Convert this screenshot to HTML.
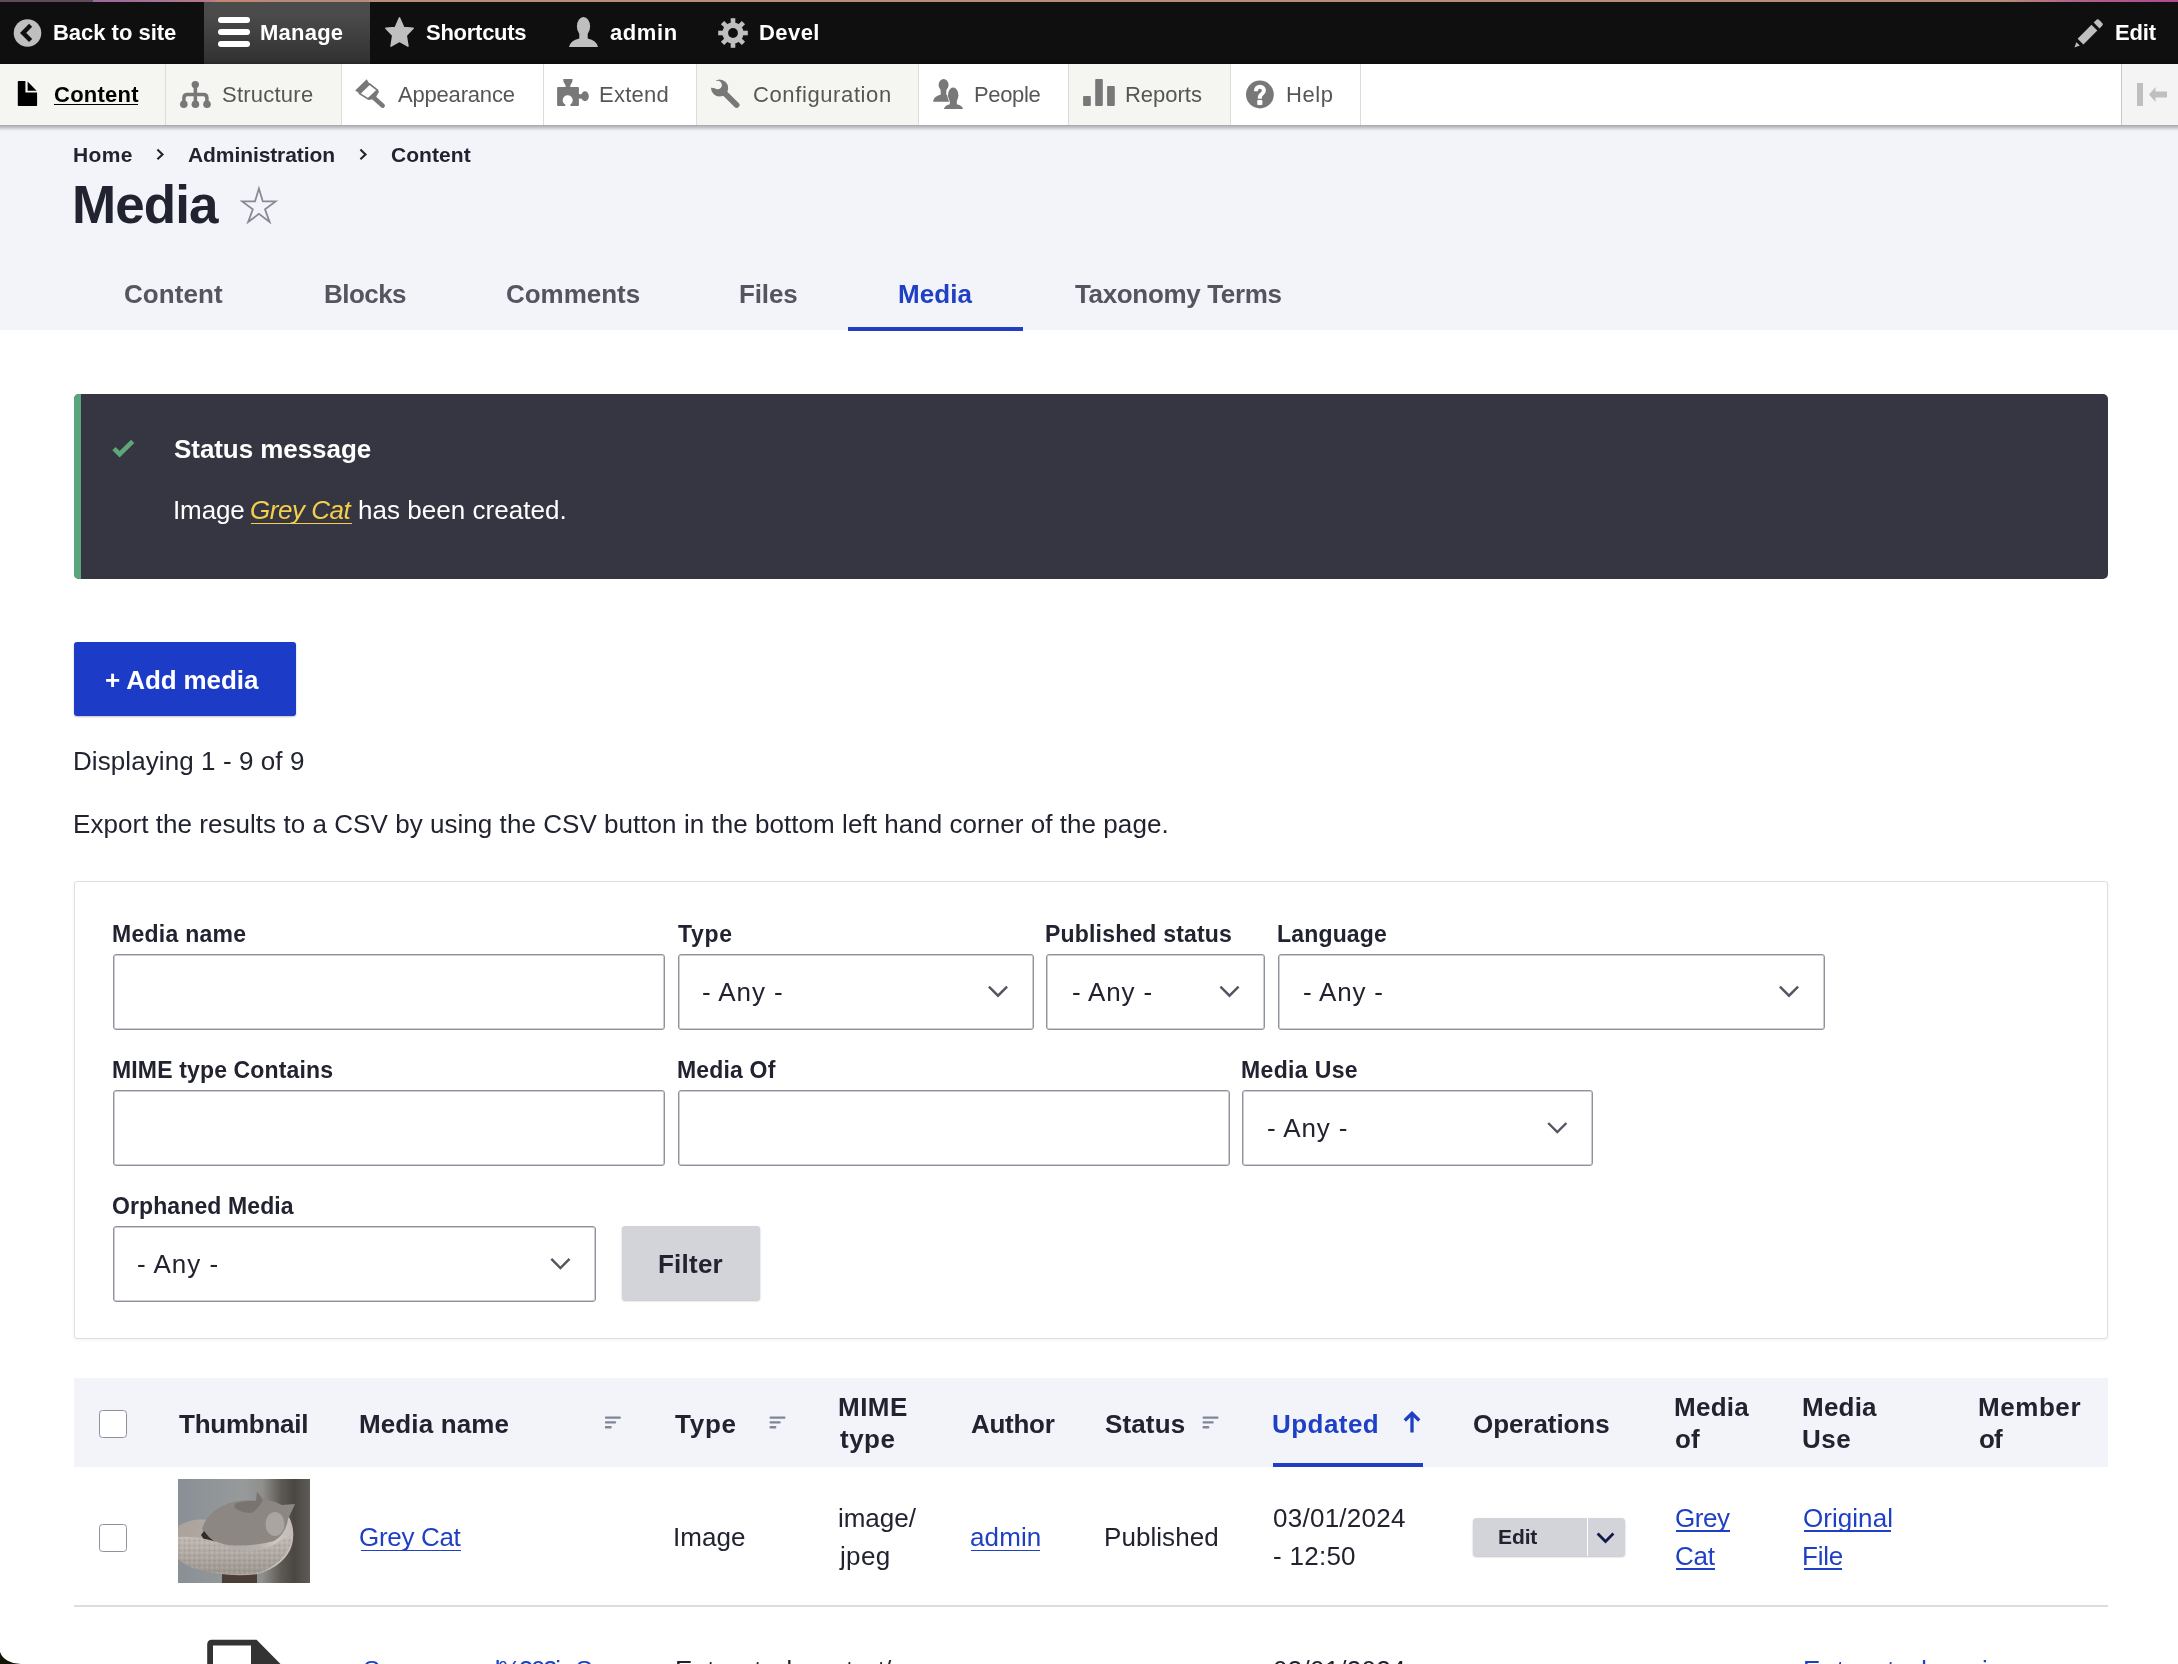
<!DOCTYPE html>
<html><head><meta charset="utf-8"><title>Media</title>
<style>
html,body{margin:0;padding:0;}
body{width:2178px;height:1664px;overflow:hidden;position:relative;background:#fff;font-family:"Liberation Sans",sans-serif;}
.a{position:absolute;}
.t{position:absolute;white-space:pre;will-change:transform;}
.inp{position:absolute;box-sizing:border-box;border:1px solid #8e929c;box-shadow:inset 0 0 0 1px rgba(142,146,156,0.45);border-radius:3px;background:#fff;}
.chev{position:absolute;}
</style></head><body>

<div class="a" style="left:0;top:0;width:2178px;height:2px;background:linear-gradient(90deg,#5e4a58 0px,#5e4a58 93px,#9a68a0 93px,#b77a88 215px,#c08670 215px,#c08670 265px,#b98c78 265px,#b98c78 2000px,#b0608a 2080px,#b04a90 2178px)"></div>
<div class="a" style="left:0;top:2px;width:2178px;height:62px;background:#0f0f0f"></div>
<div class="a" style="left:204px;top:2px;width:166px;height:62px;background:linear-gradient(180deg,#4b4b4b 0%,#4b4b4b 20%,#303030 100%)"></div>
<!-- tray -->
<div class="a" style="left:0;top:64px;width:2178px;height:61px;background:#fff;box-shadow:0 1px 4px 1px rgba(0,0,0,0.35)"></div>
<div class="a" style="left:0;top:125px;width:2178px;height:205px;background:#f3f4f9"></div>
<div class="a" style="left:0;top:125px;width:2178px;height:6px;background:linear-gradient(180deg,rgba(0,0,0,0.32),rgba(0,0,0,0))"></div>
<div class="a" style="left:0;top:64px;width:165px;height:61px;background:#f5f5f2;border-right:1px solid #dcdcdc"></div>
<div class="a" style="left:166px;top:64px;width:175px;height:61px;background:#f5f5f2;border-right:1px solid #dcdcdc"></div>
<div class="a" style="left:342px;top:64px;width:201px;height:61px;background:#fff;border-right:1px solid #dcdcdc"></div>
<div class="a" style="left:544px;top:64px;width:152px;height:61px;background:#fff;border-right:1px solid #dcdcdc"></div>
<div class="a" style="left:697px;top:64px;width:221px;height:61px;background:#f5f5f2;border-right:1px solid #dcdcdc"></div>
<div class="a" style="left:919px;top:64px;width:149px;height:61px;background:#fff;border-right:1px solid #dcdcdc"></div>
<div class="a" style="left:1069px;top:64px;width:161px;height:61px;background:#f5f5f2;border-right:1px solid #dcdcdc"></div>
<div class="a" style="left:1231px;top:64px;width:129px;height:61px;background:#fff;border-right:1px solid #dcdcdc"></div>
<div class="a" style="left:2121px;top:64px;width:57px;height:61px;background:#f4f4f4;border-left:1px solid #c8c8c8"></div>
<!-- status message -->
<div class="a" style="left:74px;top:394px;width:2034px;height:185px;background:#353641;border-radius:5px;overflow:hidden"><div class="a" style="left:0;top:0;width:7px;height:185px;background:#5aa57a"></div></div>
<!-- add media -->
<div class="a" style="left:74px;top:642px;width:222px;height:74px;background:#1c3cc8;border-radius:3px;box-shadow:0 1px 2px rgba(0,0,0,0.25)"></div>
<!-- filter box -->
<div class="a" style="left:74px;top:881px;width:2034px;height:458px;box-sizing:border-box;border:1px solid #dedfe4;border-radius:3px;background:#fff;box-shadow:0 1px 3px rgba(0,0,0,0.06)"></div>
<div class="inp" style="left:113px;top:954px;width:552px;height:76px"></div>
<div class="inp" style="left:678px;top:954px;width:356px;height:76px"></div>
<div class="inp" style="left:1046px;top:954px;width:219px;height:76px"></div>
<div class="inp" style="left:1278px;top:954px;width:547px;height:76px"></div>
<div class="inp" style="left:113px;top:1090px;width:552px;height:76px"></div>
<div class="inp" style="left:678px;top:1090px;width:552px;height:76px"></div>
<div class="inp" style="left:1242px;top:1090px;width:351px;height:76px"></div>
<div class="inp" style="left:113px;top:1226px;width:483px;height:76px"></div>
<div class="a" style="left:622px;top:1226px;width:138px;height:74px;background:#d3d4d9;border-radius:3px;box-shadow:0 1px 2px rgba(0,0,0,0.25)"></div>
<!-- table -->
<div class="a" style="left:74px;top:1378px;width:2034px;height:89px;background:#f3f4f9"></div>
<div class="a" style="left:1273px;top:1463px;width:150px;height:4px;background:#1f3fc5"></div>
<div class="a" style="left:74px;top:1605px;width:2034px;height:2px;background:#dcdde1"></div>
<div class="a" style="left:848px;top:327px;width:175px;height:4px;background:#1f3fc5"></div>
<svg class="a" style="left:0;top:0" width="2178" height="1664" viewBox="0 0 2178 1664"><circle cx="27.5" cy="33" r="13.8" fill="#bfbfbf"/><polyline points="30.6,25.3 23.1,32.9 30.6,40.5" fill="none" stroke="#0f0f0f" stroke-width="4.4"/><rect x="218" y="17" width="32" height="6" rx="3" fill="#fff"/><rect x="218" y="29" width="32" height="6" rx="3" fill="#fff"/><rect x="218" y="41" width="32" height="6" rx="3" fill="#fff"/><polygon points="399.5,17.8 403.7,27.4 413.2,28.2 406.3,35.4 408,46.2 399.5,41.3 391,46.2 392.7,35.4 385.8,28.2 395.3,27.4" fill="#bfbfbf" stroke="#bfbfbf" stroke-width="1.4" stroke-linejoin="round"/><ellipse cx="583.5" cy="26.3" rx="6.6" ry="9.4" fill="#bfbfbf"/><path d="M579.3,32 L587.7,32 L587.7,38.6 Q596.5,40.5 598,47 L569,47 Q570.5,40.5 579.3,38.6 Z" fill="#bfbfbf"/><rect x="730.70" y="18.20" width="4.6" height="7" fill="#bfbfbf" transform="rotate(0 733 33)"/><rect x="730.70" y="18.20" width="4.6" height="7" fill="#bfbfbf" transform="rotate(45 733 33)"/><rect x="730.70" y="18.20" width="4.6" height="7" fill="#bfbfbf" transform="rotate(90 733 33)"/><rect x="730.70" y="18.20" width="4.6" height="7" fill="#bfbfbf" transform="rotate(135 733 33)"/><rect x="730.70" y="18.20" width="4.6" height="7" fill="#bfbfbf" transform="rotate(180 733 33)"/><rect x="730.70" y="18.20" width="4.6" height="7" fill="#bfbfbf" transform="rotate(225 733 33)"/><rect x="730.70" y="18.20" width="4.6" height="7" fill="#bfbfbf" transform="rotate(270 733 33)"/><rect x="730.70" y="18.20" width="4.6" height="7" fill="#bfbfbf" transform="rotate(315 733 33)"/><circle cx="733" cy="33" r="10.6" fill="#bfbfbf"/><circle cx="733" cy="33" r="4.9" fill="#0f0f0f"/><polygon points="2077.6,38.7 2091.5,24.7 2097.3,30.5 2083.4,44.5" fill="#bfbfbf"/><path d="M2093.7,22.6 L2096.5,19.8 Q2097.5,18.8 2098.7,19.6 L2102.4,23.2 Q2103.3,24.3 2102.4,25.4 L2099.5,28.4 Z" fill="#bfbfbf"/><polygon points="2074.5,47.4 2076.3,42.2 2079.8,45.6" fill="#bfbfbf"/><rect x="2137" y="83" width="6" height="23" fill="#bfbfbf"/><polygon points="2149,94.5 2155.5,87 2155.5,91.5 2167,91.5 2167,97.5 2155.5,97.5 2155.5,102" fill="#bfbfbf"/><path d="M18.6,81 L25.4,81 L25.4,92.4 L37.1,92.4 L37.1,105.2 Q37.1,106 36.3,106 L18.6,106 Q17.8,106 17.8,105.2 L17.8,81.8 Q17.8,81 18.6,81 Z" fill="#000"/><polygon points="27.6,81.6 27.6,90.7 36.6,90.7" fill="#000"/><circle cx="195.3" cy="84.6" r="3.7" fill="#787878"/><circle cx="183.8" cy="104.3" r="3.8" fill="#787878"/><circle cx="195.4" cy="104.3" r="3.8" fill="#787878"/><circle cx="207" cy="104.3" r="3.8" fill="#787878"/><rect x="193.6" y="85" width="3.5" height="19" fill="#787878"/><path d="M183.9,104 L183.9,98 Q183.9,94.5 187.4,94.5 L203.4,94.5 Q206.9,94.5 206.9,98 L206.9,104" fill="none" stroke="#787878" stroke-width="3.5"/><polygon points="366.7,79.3 355.2,90.5 359.6,93.6 369.6,84" fill="#787878"/><polygon points="369.6,84 377.3,90 368.2,98.9 359.6,93.6" fill="none" stroke="#787878" stroke-width="1.6"/><polygon points="377.6,89.6 379,91.8 375.8,97.4 371.2,99.5 368.6,100 367.8,98.6" fill="#787878"/><line x1="373" y1="97" x2="382.6" y2="105.6" stroke="#787878" stroke-width="4.6" stroke-linecap="round"/><rect x="557.1" y="87.1" width="21.8" height="18.9" rx="0.8" fill="#787878"/><path d="M563.2,79 L572.6,79 Q573,82 570.3,85.2 L570.3,87.5 L565.6,87.5 L565.6,85.2 Q562.8,82 563.2,79 Z" fill="#787878"/><ellipse cx="585" cy="96.3" rx="3.8" ry="5" fill="#787878"/><rect x="578" y="94.2" width="5" height="4.4" fill="#787878"/><circle cx="567.7" cy="100.3" r="5" fill="#fff"/><rect x="565.4" y="101" width="5" height="6" fill="#fff"/><circle cx="719.6" cy="88" r="8.6" fill="#787878"/><line x1="723" y1="91.5" x2="736.6" y2="105" stroke="#787878" stroke-width="5.8" stroke-linecap="round"/><circle cx="717.6" cy="85" r="4.3" fill="#f5f5f2"/><polygon points="717.6,85 714.5,76 704,86.5 714.4,88.2" fill="#f5f5f2"/><ellipse cx="943.6" cy="84.8" rx="5" ry="5.9" fill="#787878"/><path d="M940.5,89 L946.5,89 L946.2,94.6 Q950,96 951,101.8 L933,101.8 Q933.5,96.5 940.8,94.6 Z" fill="#787878"/><g stroke="#fff" stroke-width="1.4"><ellipse cx="953.2" cy="95.2" rx="5.2" ry="7.6" fill="#787878"/><path d="M949.6,101 L957,101 L956.8,103.6 Q963.5,105 963.8,109.8 L943,109.8 Q943.5,105 949.8,103.6 Z" fill="#787878"/></g><ellipse cx="953.2" cy="95.2" rx="5.2" ry="7.6" fill="#787878"/><rect x="949.8" y="100" width="7" height="5" fill="#787878"/><rect x="1083.1" y="96.1" width="7.7" height="9.8" rx="0.8" fill="#787878"/><rect x="1095.2" y="79.1" width="7.6" height="26.8" rx="0.8" fill="#787878"/><rect x="1107.1" y="86.1" width="7.7" height="19.8" rx="0.8" fill="#787878"/><circle cx="1259.9" cy="94.5" r="13.9" fill="#787878"/><path d="M1256,91.2 L1256,90.5 A3.95,3.8 0 0 1 1263.9,90.5 C1263.9,93 1262,94 1260.8,95 C1259.8,96 1259.8,97 1259.8,98.7" fill="none" stroke="#fff" stroke-width="4"/><rect x="1257.2" y="100" width="5.2" height="5" rx="1" fill="#fff"/><polyline points="157.4,149.6 162.5,154.4 157.4,159.2" fill="none" stroke="#222330" stroke-width="2.1"/><polyline points="360.4,149.6 365.5,154.4 360.4,159.2" fill="none" stroke="#222330" stroke-width="2.1"/><polygon points="258.9,188.6 262.8,201.4 275.6,201.4 265,209.3 269.6,221.9 258.9,213.9 248.2,221.9 252.8,209.3 242.2,201.4 255,201.4" fill="none" stroke="#868a95" stroke-width="1.8"/><polyline points="114,448.7 119.6,454.2 132.7,441.4" fill="none" stroke="#5ea77b" stroke-width="4.6"/><polyline points="988.90,986.60 998.00,995.70 1007.10,986.60" fill="none" stroke="#545560" stroke-width="2.4"/><polyline points="1220.40,986.60 1229.50,995.70 1238.60,986.60" fill="none" stroke="#545560" stroke-width="2.4"/><polyline points="1779.90,986.60 1789.00,995.70 1798.10,986.60" fill="none" stroke="#545560" stroke-width="2.4"/><polyline points="1548.20,1123.00 1557.30,1132.10 1566.40,1123.00" fill="none" stroke="#545560" stroke-width="2.4"/><polyline points="551.30,1258.90 560.40,1268.00 569.50,1258.90" fill="none" stroke="#545560" stroke-width="2.4"/><rect x="604.9" y="1416.5" width="16" height="2.3" rx="1" fill="#80859a"/><rect x="604.9" y="1421.3" width="11.2" height="2.3" rx="1" fill="#80859a"/><rect x="604.9" y="1426.1" width="6.8" height="2.3" rx="1" fill="#80859a"/><rect x="769.5" y="1416.5" width="16" height="2.3" rx="1" fill="#80859a"/><rect x="769.5" y="1421.3" width="11.2" height="2.3" rx="1" fill="#80859a"/><rect x="769.5" y="1426.1" width="6.8" height="2.3" rx="1" fill="#80859a"/><rect x="1202.5" y="1416.5" width="16" height="2.3" rx="1" fill="#80859a"/><rect x="1202.5" y="1421.3" width="11.2" height="2.3" rx="1" fill="#80859a"/><rect x="1202.5" y="1426.1" width="6.8" height="2.3" rx="1" fill="#80859a"/><line x1="1412" y1="1413.5" x2="1412" y2="1432.5" stroke="#1f3fc5" stroke-width="3.3"/><polyline points="1404.8,1420.5 1412,1413.3 1419.2,1420.5" fill="none" stroke="#1f3fc5" stroke-width="3.3"/><path fill-rule="evenodd" d="M207.2,1664 L207.2,1644.5 Q207.2,1639.8 211.9,1639.8 L256.6,1639.8 L280.5,1664 Z M213,1664 L213,1645.4 L251,1645.4 L251,1664 Z" fill="#333"/></svg>
<!-- checkboxes -->
<div class="a" style="left:99px;top:1410px;width:28px;height:28px;box-sizing:border-box;border:1.5px solid #8e929c;border-radius:3.5px;background:#fff"></div>
<div class="a" style="left:99px;top:1523.5px;width:28px;height:28px;box-sizing:border-box;border:1.5px solid #8e929c;border-radius:3.5px;background:#fff"></div>
<!-- dropbutton -->
<div class="a" style="left:1473px;top:1518px;width:152px;height:38px;background:#d3d4d9;border-radius:3.5px;box-shadow:0 1px 2px rgba(0,0,0,0.25)"></div>
<div class="a" style="left:1587px;top:1518px;width:1px;height:38px;background:#fff"></div>
<svg class="a" style="left:1590px;top:1525px" width="30" height="24" viewBox="1590 1525 30 24"><polyline points="1597.6,1533.6 1605.5,1541.5 1613.4,1533.6" fill="none" stroke="#101a48" stroke-width="2.8"/></svg>
<!-- underlines -->
<div class="a" style="left:54px;top:103.5px;width:84px;height:1.6px;background:#000"></div>
<div class="a" style="left:251px;top:522.5px;width:101px;height:1.6px;background:#f4cf4c"></div>
<div class="a" style="left:360.5px;top:1549.6px;width:100.5px;height:1.6px;background:#1f3fc5"></div>
<div class="a" style="left:971px;top:1549.6px;width:69px;height:1.6px;background:#1f3fc5"></div>
<div class="a" style="left:1676px;top:1530.4px;width:54px;height:1.6px;background:#1f3fc5"></div>
<div class="a" style="left:1676px;top:1568.2px;width:39px;height:1.6px;background:#1f3fc5"></div>
<div class="a" style="left:1803.8px;top:1530.4px;width:87px;height:1.6px;background:#1f3fc5"></div>
<div class="a" style="left:1803.8px;top:1568.2px;width:38px;height:1.6px;background:#1f3fc5"></div>
<!-- cat thumbnail -->
<svg class="a" style="left:178px;top:1479px" width="132" height="104" viewBox="0 0 132 104">
<defs>
<linearGradient id="bgc" x1="0" y1="0" x2="1" y2="0">
<stop offset="0" stop-color="#899096"/><stop offset="0.5" stop-color="#979a9b"/><stop offset="0.64" stop-color="#8f8f8c"/><stop offset="0.78" stop-color="#5d5a55"/><stop offset="0.88" stop-color="#4a4743"/><stop offset="1" stop-color="#5f5b56"/>
</linearGradient>
<linearGradient id="bedg" x1="0" y1="0" x2="0" y2="1">
<stop offset="0" stop-color="#c2bab4"/><stop offset="1" stop-color="#9d958f"/>
</linearGradient>
<pattern id="tex" width="5" height="5" patternUnits="userSpaceOnUse"><rect width="5" height="5" fill="none"/><circle cx="1.5" cy="1.5" r="1" fill="#7d756f" opacity="0.35"/><circle cx="4" cy="3.8" r="0.8" fill="#e6dfd9" opacity="0.35"/></pattern>
</defs>
<rect width="132" height="104" fill="url(#bgc)"/>
<rect x="44" y="90" width="35" height="14" fill="#4a3e37"/>
<linearGradient id="bedr" x1="0" y1="0" x2="1" y2="0"><stop offset="0" stop-color="#aaa29b"/><stop offset="0.7" stop-color="#b8b0aa"/><stop offset="0.85" stop-color="#d0c7c2"/><stop offset="1" stop-color="#c2b9b4"/></linearGradient>
<path d="M0,47 Q18,37 34,42 Q60,52 90,50 Q105,44 110,36 Q118,50 114,66 Q108,86 80,95 Q50,99 20,90 Q4,84 0,80 Z" fill="url(#bedr)"/>
<path d="M24,50 Q30,30 55,23 Q70,20 78,22 L79,12 L86,20 Q96,22 104,26 L117,25 Q113,34 110,40 Q108,55 96,62 Q75,68 50,66 Q30,62 24,50 Z" fill="#8d8783"/>
<path d="M58,24 Q70,21 78,22 L79,13 L85,21 Q80,30 74,34 Q62,34 56,28 Z" fill="#7a7470"/>
<ellipse cx="97" cy="45" rx="9.5" ry="12" fill="#aba5a1"/>
<path d="M26,52 Q34,64 50,68 L42,71 Q28,66 23,56 Z" fill="#302c2a"/>
<path d="M0,58 Q28,56 55,70 Q82,76 102,62 Q110,56 114,58 Q110,84 80,94 Q45,98 15,89 Q3,84 0,79 Z" fill="url(#bedg)"/>
<path d="M0,58 Q28,56 55,70 Q82,76 102,62 Q110,56 114,58 Q110,84 80,94 Q45,98 15,89 Q3,84 0,79 Z" fill="url(#tex)"/>
</svg>
<!-- bottom-left window corner -->
<svg class="a" style="left:0;top:1644px" width="24" height="20" viewBox="0 0 24 20"><path d="M0,8 Q4,19 21,20 L0,20 Z" fill="#141408"/></svg>
<div class="t" style="left:53.46px;top:22.17px;font-size:22px;line-height:22px;font-weight:700;color:#fff;letter-spacing:-0.020px;">Back to site</div>
<div class="t" style="left:259.76px;top:22.17px;font-size:22px;line-height:22px;font-weight:700;color:#fff;letter-spacing:0.232px;">Manage</div>
<div class="t" style="left:425.94px;top:22.17px;font-size:22px;line-height:22px;font-weight:700;color:#fff;letter-spacing:-0.262px;">Shortcuts</div>
<div class="t" style="left:610.34px;top:22.17px;font-size:22px;line-height:22px;font-weight:700;color:#fff;letter-spacing:0.575px;">admin</div>
<div class="t" style="left:759.06px;top:22.17px;font-size:22px;line-height:22px;font-weight:700;color:#fff;letter-spacing:0.435px;">Devel</div>
<div class="t" style="left:2115.06px;top:22.17px;font-size:22px;line-height:22px;font-weight:700;color:#fff;letter-spacing:-0.140px;">Edit</div>
<div class="t" style="left:53.62px;top:84.17px;font-size:22px;line-height:22px;font-weight:700;color:#000;letter-spacing:0.240px;">Content</div>
<div class="t" style="left:221.90px;top:84.17px;font-size:22px;line-height:22px;color:#565656;letter-spacing:0.235px;">Structure</div>
<div class="t" style="left:398.00px;top:84.17px;font-size:22px;line-height:22px;color:#565656;letter-spacing:-0.189px;">Appearance</div>
<div class="t" style="left:599.24px;top:84.17px;font-size:22px;line-height:22px;color:#565656;letter-spacing:0.232px;">Extend</div>
<div class="t" style="left:752.90px;top:84.17px;font-size:22px;line-height:22px;color:#565656;letter-spacing:0.612px;">Configuration</div>
<div class="t" style="left:974.24px;top:84.17px;font-size:22px;line-height:22px;color:#565656;letter-spacing:-0.356px;">People</div>
<div class="t" style="left:1124.74px;top:84.17px;font-size:22px;line-height:22px;color:#565656;letter-spacing:-0.013px;">Reports</div>
<div class="t" style="left:1285.94px;top:84.17px;font-size:22px;line-height:22px;color:#565656;letter-spacing:0.547px;">Help</div>
<div class="t" style="left:73.03px;top:143.52px;font-size:21px;line-height:21px;font-weight:700;color:#222330;letter-spacing:0.377px;">Home</div>
<div class="t" style="left:188.37px;top:143.52px;font-size:21px;line-height:21px;font-weight:700;color:#222330;letter-spacing:-0.089px;">Administration</div>
<div class="t" style="left:391.16px;top:143.52px;font-size:21px;line-height:21px;font-weight:700;color:#222330;letter-spacing:0.062px;">Content</div>
<div class="t" style="left:71.79px;top:177.62px;font-size:53px;line-height:53px;font-weight:700;color:#222330;letter-spacing:-0.928px;">Media</div>
<div class="t" style="left:124.16px;top:281.19px;font-size:26px;line-height:26px;font-weight:700;color:#545560;letter-spacing:0.070px;">Content</div>
<div class="t" style="left:323.68px;top:281.19px;font-size:26px;line-height:26px;font-weight:700;color:#545560;letter-spacing:-0.544px;">Blocks</div>
<div class="t" style="left:505.96px;top:281.19px;font-size:26px;line-height:26px;font-weight:700;color:#545560;letter-spacing:-0.020px;">Comments</div>
<div class="t" style="left:739.48px;top:281.19px;font-size:26px;line-height:26px;font-weight:700;color:#545560;letter-spacing:-0.130px;">Files</div>
<div class="t" style="left:897.98px;top:281.19px;font-size:26px;line-height:26px;font-weight:700;color:#1f3fc5;letter-spacing:0.095px;">Media</div>
<div class="t" style="left:1074.74px;top:281.19px;font-size:26px;line-height:26px;font-weight:700;color:#545560;letter-spacing:-0.345px;">Taxonomy Terms</div>
<div class="t" style="left:173.92px;top:435.99px;font-size:26px;line-height:26px;font-weight:700;color:#fff;letter-spacing:-0.062px;">Status message</div>
<div class="t" style="left:172.86px;top:496.99px;font-size:26px;line-height:26px;color:#fff;letter-spacing:-0.110px;">Image</div>
<div class="t" style="left:250.40px;top:496.99px;font-size:26px;line-height:26px;font-style:italic;color:#f4cf4c;letter-spacing:-0.469px;">Grey Cat</div>
<div class="t" style="left:357.68px;top:496.99px;font-size:26px;line-height:26px;color:#fff;letter-spacing:0.035px;">has been created.</div>
<div class="t" style="left:104.86px;top:667.19px;font-size:26px;line-height:26px;font-weight:700;color:#fff;letter-spacing:-0.100px;">+ Add media</div>
<div class="t" style="left:73.32px;top:748.19px;font-size:26px;line-height:26px;color:#222330;letter-spacing:0.082px;">Displaying 1 - 9 of 9</div>
<div class="t" style="left:72.72px;top:810.99px;font-size:26px;line-height:26px;color:#222330;letter-spacing:0.047px;">Export the results to a CSV by using the CSV button in the bottom left hand corner of the page.</div>
<div class="t" style="left:112.29px;top:922.53px;font-size:23px;line-height:23px;font-weight:700;color:#222330;letter-spacing:0.260px;">Media name</div>
<div class="t" style="left:678.27px;top:922.53px;font-size:23px;line-height:23px;font-weight:700;color:#222330;letter-spacing:0.690px;">Type</div>
<div class="t" style="left:1045.09px;top:922.53px;font-size:23px;line-height:23px;font-weight:700;color:#222330;letter-spacing:0.189px;">Published status</div>
<div class="t" style="left:1276.89px;top:922.53px;font-size:23px;line-height:23px;font-weight:700;color:#222330;letter-spacing:0.177px;">Language</div>
<div class="t" style="left:112.29px;top:1058.63px;font-size:23px;line-height:23px;font-weight:700;color:#222330;letter-spacing:0.149px;">MIME type Contains</div>
<div class="t" style="left:676.89px;top:1058.63px;font-size:23px;line-height:23px;font-weight:700;color:#222330;letter-spacing:0.174px;">Media Of</div>
<div class="t" style="left:1240.99px;top:1058.63px;font-size:23px;line-height:23px;font-weight:700;color:#222330;letter-spacing:0.360px;">Media Use</div>
<div class="t" style="left:112.28px;top:1195.23px;font-size:23px;line-height:23px;font-weight:700;color:#222330;letter-spacing:0.108px;">Orphaned Media</div>
<div class="t" style="left:702.26px;top:978.99px;font-size:26px;line-height:26px;color:#222330;letter-spacing:0.940px;">- Any -</div>
<div class="t" style="left:1071.96px;top:978.99px;font-size:26px;line-height:26px;color:#222330;letter-spacing:0.823px;">- Any -</div>
<div class="t" style="left:1303.16px;top:978.99px;font-size:26px;line-height:26px;color:#222330;letter-spacing:0.790px;">- Any -</div>
<div class="t" style="left:1267.36px;top:1114.99px;font-size:26px;line-height:26px;color:#222330;letter-spacing:0.873px;">- Any -</div>
<div class="t" style="left:137.26px;top:1250.99px;font-size:26px;line-height:26px;color:#222330;letter-spacing:0.990px;">- Any -</div>
<div class="t" style="left:657.88px;top:1251.29px;font-size:26px;line-height:26px;font-weight:700;color:#222330;letter-spacing:0.228px;">Filter</div>
<div class="t" style="left:179.04px;top:1410.79px;font-size:26px;line-height:26px;font-weight:700;color:#222330;letter-spacing:-0.240px;">Thumbnail</div>
<div class="t" style="left:359.18px;top:1410.79px;font-size:26px;line-height:26px;font-weight:700;color:#222330;letter-spacing:0.120px;">Media name</div>
<div class="t" style="left:675.04px;top:1410.79px;font-size:26px;line-height:26px;font-weight:700;color:#222330;letter-spacing:0.747px;">Type</div>
<div class="t" style="left:838.48px;top:1394.29px;font-size:26px;line-height:26px;font-weight:700;color:#222330;letter-spacing:0.467px;">MIME</div>
<div class="t" style="left:840.04px;top:1426.49px;font-size:26px;line-height:26px;font-weight:700;color:#222330;letter-spacing:0.480px;">type</div>
<div class="t" style="left:970.62px;top:1410.79px;font-size:26px;line-height:26px;font-weight:700;color:#222330;letter-spacing:-0.276px;">Author</div>
<div class="t" style="left:1104.82px;top:1410.79px;font-size:26px;line-height:26px;font-weight:700;color:#222330;letter-spacing:0.132px;">Status</div>
<div class="t" style="left:1272.34px;top:1410.79px;font-size:26px;line-height:26px;font-weight:700;color:#1f3fc5;letter-spacing:0.447px;">Updated</div>
<div class="t" style="left:1472.96px;top:1410.79px;font-size:26px;line-height:26px;font-weight:700;color:#222330;letter-spacing:-0.067px;">Operations</div>
<div class="t" style="left:1674.48px;top:1394.29px;font-size:26px;line-height:26px;font-weight:700;color:#222330;letter-spacing:0.270px;">Media</div>
<div class="t" style="left:1675.26px;top:1426.49px;font-size:26px;line-height:26px;font-weight:700;color:#222330;letter-spacing:0.040px;">of</div>
<div class="t" style="left:1801.98px;top:1394.29px;font-size:26px;line-height:26px;font-weight:700;color:#222330;letter-spacing:0.220px;">Media</div>
<div class="t" style="left:1802.24px;top:1426.49px;font-size:26px;line-height:26px;font-weight:700;color:#222330;letter-spacing:0.480px;">Use</div>
<div class="t" style="left:1978.38px;top:1394.29px;font-size:26px;line-height:26px;font-weight:700;color:#222330;letter-spacing:0.560px;">Member</div>
<div class="t" style="left:1979.16px;top:1426.49px;font-size:26px;line-height:26px;font-weight:700;color:#222330;letter-spacing:-0.860px;">of</div>
<div class="t" style="left:359.30px;top:1524.29px;font-size:26px;line-height:26px;color:#1f3fc5;letter-spacing:-0.320px;">Grey Cat</div>
<div class="t" style="left:672.96px;top:1524.29px;font-size:26px;line-height:26px;color:#222330;letter-spacing:0.040px;">Image</div>
<div class="t" style="left:838.48px;top:1504.99px;font-size:26px;line-height:26px;color:#222330;letter-spacing:-0.036px;">image/</div>
<div class="t" style="left:840.22px;top:1542.99px;font-size:26px;line-height:26px;color:#222330;letter-spacing:0.333px;">jpeg</div>
<div class="t" style="left:970.36px;top:1524.29px;font-size:26px;line-height:26px;color:#1f3fc5;letter-spacing:0.120px;">admin</div>
<div class="t" style="left:1103.52px;top:1524.29px;font-size:26px;line-height:26px;color:#222330;letter-spacing:0.062px;">Published</div>
<div class="t" style="left:1272.96px;top:1504.99px;font-size:26px;line-height:26px;color:#222330;letter-spacing:0.258px;">03/01/2024</div>
<div class="t" style="left:1272.86px;top:1542.99px;font-size:26px;line-height:26px;color:#222330;letter-spacing:0.270px;">- 12:50</div>
<div class="t" style="left:1497.53px;top:1526.22px;font-size:21px;line-height:21px;font-weight:700;color:#222330;letter-spacing:-0.103px;">Edit</div>
<div class="t" style="left:1674.70px;top:1504.99px;font-size:26px;line-height:26px;color:#1f3fc5;letter-spacing:-0.453px;">Grey</div>
<div class="t" style="left:1674.70px;top:1542.99px;font-size:26px;line-height:26px;color:#1f3fc5;letter-spacing:-0.200px;">Cat</div>
<div class="t" style="left:1802.50px;top:1504.99px;font-size:26px;line-height:26px;color:#1f3fc5;letter-spacing:0.046px;">Original</div>
<div class="t" style="left:1801.72px;top:1542.99px;font-size:26px;line-height:26px;color:#1f3fc5;letter-spacing:-0.247px;">File</div>
<div class="t" style="left:362.70px;top:1657.49px;font-size:26px;line-height:26px;color:#1f3fc5;letter-spacing:-2.354px;">Sarnnmaeraal%202i aS</div>
<div class="t" style="left:674.52px;top:1657.49px;font-size:26px;line-height:26px;color:#222330;letter-spacing:0.915px;">Extracted</div>
<div class="t" style="left:845.74px;top:1657.49px;font-size:26px;line-height:26px;color:#222330;letter-spacing:-0.970px;">text/</div>
<div class="t" style="left:1272.96px;top:1657.49px;font-size:26px;line-height:26px;color:#222330;letter-spacing:0.258px;">03/01/2024</div>
<div class="t" style="left:1802.92px;top:1657.49px;font-size:26px;line-height:26px;color:#1f3fc5;letter-spacing:1.763px;">Extracted vvvi</div>
</body></html>
